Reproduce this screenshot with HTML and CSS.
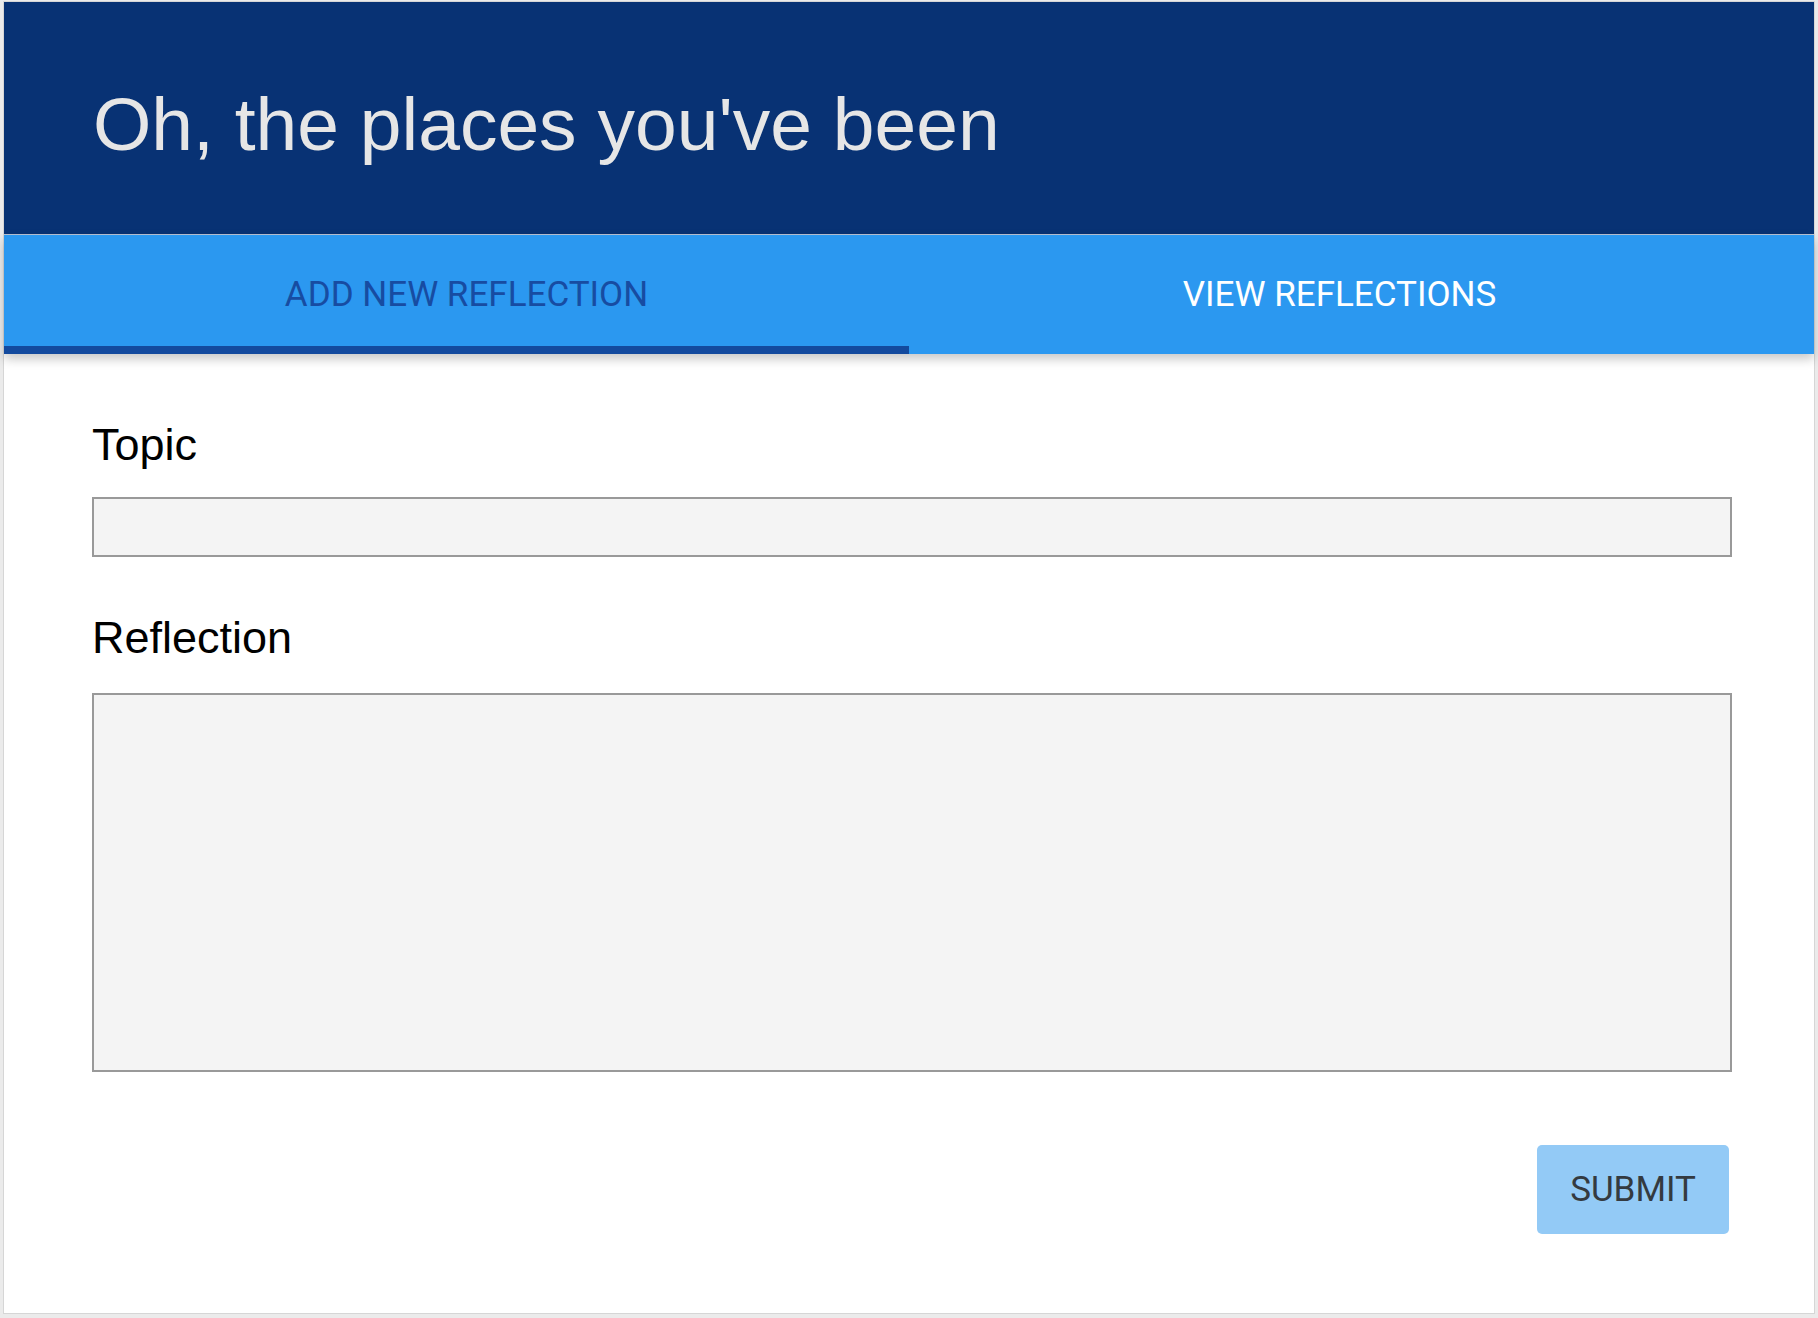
FILE: index.html
```html
<!DOCTYPE html>
<html>
<head>
<meta charset="utf-8">
<link rel="stylesheet" href="styles.css">
</head>
<body>
<div class="card">
  <header class="header">
    <h1 class="title">Oh, the places you've been</h1>
  </header>
  <nav class="tabs">
    <div class="tab tab-active">ADD NEW REFLECTION</div>
    <div class="tab tab-right">VIEW REFLECTIONS</div>
  </nav>
  <form class="form">
    <label class="label label-topic">Topic</label>
    <input class="field field-topic" type="text">
    <label class="label label-reflection">Reflection</label>
    <textarea class="field field-reflection"></textarea>
    <div class="actions">
      <button class="submit" type="button">SUBMIT</button>
    </div>
  </form>
</div>
</body>
</html>
```
FILE: styles.css
```css
html, body {
  margin: 0;
  padding: 0;
  background: #ebebeb;
}
body {
  padding: 1px 3px 4px 3px;
  box-sizing: border-box;
  height: 1318px;
}
.card {
  background: #ffffff;
  border: 1px solid #d6d6d6;
  height: 1313px;
  box-sizing: border-box;
}
.header {
  background: #083274;
  height: 233px;
  box-sizing: border-box;
  padding: 85px 0 0 89px;
  border-bottom: 1px solid #b9c3d4;
}
.title {
  margin: 0;
  font-family: "Liberation Sans", Arial, sans-serif;
  font-weight: normal;
  font-size: 75px;
  line-height: 75px;
  color: #e6e6e6;
}
.tabs {
  display: flex;
  height: 119px;
  background: #2b98f0;
  box-shadow: 0 5px 10px rgba(0, 0, 0, 0.22);
  position: relative;
}
.tab {
  flex: none;
  width: 50%;
  box-sizing: border-box;
  display: flex;
  align-items: center;
  justify-content: center;
  font-family: Roboto, "Noto Sans", sans-serif;
  font-size: 35px;
  color: #ffffff;
}
.tab-active {
  color: #174ca2;
  padding-left: 20px;
  box-shadow: inset 0 -8px 0 #134a9e;
}
.tab-right {
  padding-right: 44px;
}
.form {
  display: flex;
  flex-direction: column;
  padding: 66px 82px 0 88px;
}
.label {
  font-family: "Liberation Sans", Arial, sans-serif;
  font-size: 45px;
  line-height: 50px;
  color: #000000;
}
.label-topic {
  margin-bottom: 27px;
}
.label-reflection {
  margin-top: 56px;
  margin-bottom: 30px;
}
.field {
  display: block;
  box-sizing: border-box;
  width: 100%;
  margin: 0;
  background: #f4f4f4;
  border: 2px solid #999999;
  outline: none;
  resize: none;
  font-family: "Liberation Sans", Arial, sans-serif;
}
.field-topic {
  height: 60px;
}
.field-reflection {
  height: 379px;
}
.actions {
  display: flex;
  justify-content: flex-end;
  padding-top: 73px;
  padding-right: 3px;
}
.submit {
  width: 192px;
  height: 89px;
  background: #93caf6;
  border: none;
  border-radius: 5px;
  font-family: Roboto, "Noto Sans", sans-serif;
  font-size: 35px;
  color: #343a40;
  padding: 0;
}
```
